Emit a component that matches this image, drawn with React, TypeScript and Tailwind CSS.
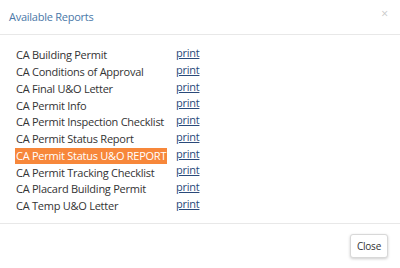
import React from "react";

const reports = [
  "CA Building Permit",
  "CA Conditions of Approval",
  "CA Final U&O Letter",
  "CA Permit Info",
  "CA Permit Inspection Checklist",
  "CA Permit Status Report",
  "CA Permit Status U&O REPORT",
  "CA Permit Tracking Checklist",
  "CA Placard Building Permit",
  "CA Temp U&O Letter",
];

export default function App() {
  return (
    <div
      className="w-[400px] h-[268px] bg-white flex flex-col overflow-hidden"
      style={{ fontFamily: '"Open Sans", "Noto Sans", sans-serif' }}
    >
      <div className="h-[35px] flex items-center justify-between pl-[9px] pr-[12px] border-b border-[#e8e8e8]">
        <span className="text-[11px] tracking-[-0.25px] text-[#4a78a8] whitespace-nowrap">Available Reports</span>
        <span className="text-[12px] text-[#c8c8c8] leading-none mb-[6px]">×</span>
      </div>
      <div className="h-[189px] pt-[10px] pl-[15px] border-b border-[#e8e8e8]">
        {reports.map((r, i) => (
          <div key={r} className="flex items-center h-[16.75px]">
            <div className="w-[161px]">
              <span
                className={
                  "text-[11px] tracking-[-0.25px] leading-[16px] px-[1px] whitespace-nowrap inline-block " +
                  (i === 6 ? "bg-[#f7873a] text-white" : "text-[#333333]")
                }
              >
                {r}
              </span>
            </div>
            <a className="text-[11px] tracking-[-0.25px] text-[#2a4a7a] underline whitespace-nowrap">print</a>
          </div>
        ))}
      </div>
      <div className="flex-1 flex items-center justify-end pr-[12px]">
        <button className="w-[38px] h-[24px] text-[10px] tracking-[-0.2px] text-[#333] bg-white border border-[#d8d8d8] rounded-[3px] shadow-[0_1px_3px_rgba(0,0,0,0.2)]">
          Close
        </button>
      </div>
    </div>
  );
}
